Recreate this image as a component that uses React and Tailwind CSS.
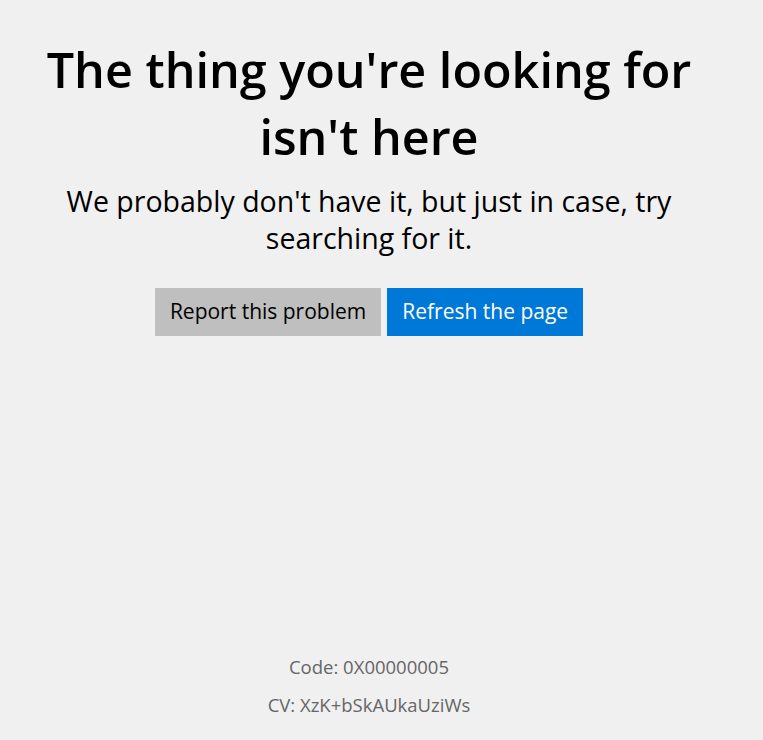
export default function App() {
  return (
    <div className="min-h-[740px] w-full bg-[#f0f0f0] flex flex-col items-center pr-[25px]" style={{ fontFamily: '"Open Sans", "Noto Sans", sans-serif' }}>
      <h1 className="mt-[36px] w-[700px] text-center text-[48.5px] leading-[67px] font-semibold text-black">
        The thing you're looking for isn't here
      </h1>
      <p className="mt-[13px] w-[680px] text-center text-[28.5px] leading-[37px] text-black">
        We probably don't have it, but just in case, try searching for it.
      </p>
      <div className="mt-[31px] flex gap-[6px]">
        <button className="h-[48px] px-[15px] bg-[#bfbfbf] text-black text-[21px]">Report this problem</button>
        <button className="h-[48px] px-[15px] bg-[#0078d7] text-white text-[21px]">Refresh the page</button>
      </div>
      <div className="mt-auto mb-[16px] flex flex-col items-center text-[#666666] text-[18.5px] leading-[38px]">
        <div>Code: 0X00000005</div>
        <div>CV: XzK+bSkAUkaUziWs</div>
      </div>
    </div>
  );
}
